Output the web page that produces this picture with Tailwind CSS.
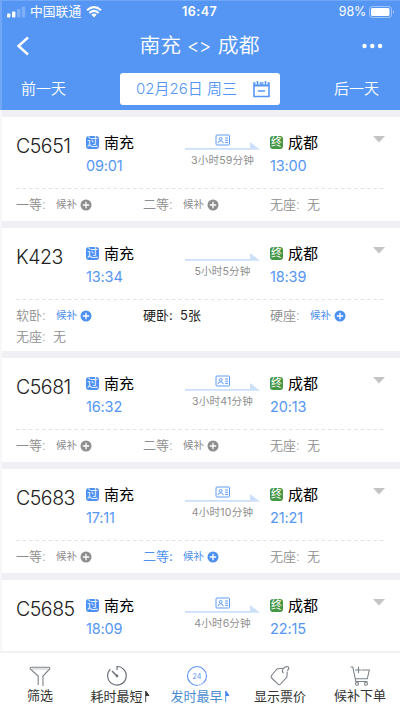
<!DOCTYPE html>
<html lang="zh-CN">
<head>
<meta charset="utf-8">
<title>南充 - 成都</title>
<script src="https://cdn.jsdelivr.net/npm/@tailwindcss/browser@4"></script>
</head>
<body class="w-[400px] h-[711px] overflow-hidden bg-[#efeff4] font-['Inter','Noto_Sans_CJK_SC',sans-serif] [font-feature-settings:'calt'_0]">
<div class="flex flex-col w-[400px] h-[711px] overflow-hidden">
  <header class="h-[110px] shrink-0 bg-[#5596f5] text-white border-l-2 border-t border-[#6fa6f6]">
    <div class="flex items-center h-[22px] pl-[5px] pr-[5px]">
      <svg class="w-[19px] h-[12px] shrink-0" viewBox="0 0 19 12"><rect x="0" y="7.5" width="3.4" height="4" rx="1" fill="#fff"/><rect x="5" y="5.5" width="3.4" height="6" rx="1" fill="#fff"/><rect x="10" y="3" width="3.4" height="8.5" rx="1" fill="#fff" opacity=".25"/><rect x="14.8" y="0.5" width="3.4" height="11" rx="1" fill="#fff" opacity=".25"/></svg>
      <span class="ml-[4px] w-[56px] text-[12.8px] leading-[20px] whitespace-nowrap">中国联通</span>
      <svg class="w-[16px] h-[12px] shrink-0" viewBox="0 0 16 12"><path d="M1 4.2Q8-2 15 4.2M3.4 6.9Q8 2.9 12.6 6.9" fill="none" stroke="#fff" stroke-width="2"/><path d="M5.3 8.6Q8 6.4 10.7 8.6L8 11.4Z" fill="#fff"/></svg>
      <span class="ml-[80px] w-[40px] text-[12.6px] leading-[20px] font-semibold tracking-[.45px]">16:47</span>
      <span class="ml-auto text-[12.5px] leading-[20px] tracking-[-.2px]">98%</span>
      <svg class="ml-[3px] w-[26px] h-[12px] shrink-0" viewBox="0 0 26 12"><rect x=".5" y=".5" width="22" height="11" rx="3" fill="none" stroke="#fff" opacity=".45"/><rect x="2" y="2" width="18.5" height="8" rx="1.5" fill="#fff"/><path d="M24 4Q26 6 24 8Z" fill="#fff" opacity=".5"/></svg>
    </div>
    <div class="flex items-center justify-between h-[45px] pl-[14px] pr-[17px]">
      <svg class="w-[14px] h-[20px]" viewBox="0 0 14 20"><path d="M12 1.5L2.5 10L12 18.5" fill="none" stroke="#fff" stroke-width="2.4"/></svg>
      <h1 class="mt-px ml-[7px] text-[20.8px] leading-[30px] font-[350] whitespace-nowrap">南充 <span class="inline-block w-[25px] text-[19px] tracking-[-.6px]">&lt;&gt;</span> 成都</h1>
      <svg class="w-[21px] h-[6px]" viewBox="0 0 21 6"><circle cx="2.5" cy="3" r="2.2" fill="#fff"/><circle cx="10.3" cy="3" r="2.2" fill="#fff"/><circle cx="18.1" cy="3" r="2.2" fill="#fff"/></svg>
    </div>
    <div class="flex items-center h-[41px] pl-[19px] pr-[21px] text-[15px] font-[350]">
      <span class="w-[99px] mt-px whitespace-nowrap">前一天</span>
      <div class="flex items-center w-[160px] h-[32px] mt-[1px] rounded-[3px] bg-white text-[#5596f5] pl-[16px] pr-[10px] whitespace-nowrap"><span class="text-[15px]">02月26日 周三</span>
        <svg class="ml-auto w-[17px] h-[17px]" viewBox="0 0 17 17" fill="none" stroke="#5596f5"><path d="M1 2H16V15.5H1ZM5 10H12" stroke-width="1.6"/><path d="M1 4.3H16" stroke-width="2.4"/><path d="M4.5 0V3.6M12.5 0V3.6" stroke="#fff" stroke-width="4"/><path d="M4.5 0V4M12.5 0V4" stroke-width="1.6"/></svg>
      </div>
      <span class="ml-auto mt-px whitespace-nowrap">后一天</span>
    </div>
  </header>
  <main id="trains" class="flex flex-col gap-[7px] pt-[7px] h-[541px] overflow-hidden border-l-2 border-[#f7f7fa]"></main>
  <nav class="flex h-[60px] shrink-0 bg-white border-t-2 border-[#f2f2f4] text-[13px] leading-[18px] text-[#333] whitespace-nowrap">
    <div class="flex flex-col items-center w-[80px] pt-[12px]">
      <svg class="w-[22px] h-[22px]" viewBox="0 0 22 22" fill="none" stroke="#7b8188" stroke-width="1.1"><path d="M9.2 20V11L1.3 4Q1 2.2 2.5 2.2H19.5Q21 2.2 20.7 4L14 11V21"/><path d="M3 4H19" stroke="#b5b9bd" stroke-width=".8"/></svg>
      <span class="-mt-[1px]">筛选</span>
    </div>
    <div class="flex flex-col items-center w-[80px] pt-[12px]">
      <svg class="-ml-[6px] w-[22px] h-[22px]" viewBox="0 0 22 22" fill="none" stroke="#6b7178" stroke-width="1.2"><path d="M11 5V1.5A9.3 9.3 0 1 1 4.4 4.2"/><path d="M6 6L11 11" stroke-width="1.5"/><circle cx="11" cy="11" r=".8" fill="#6b7178"/></svg>
      <div class="flex items-center"><span>耗时最短</span><svg class="ml-[2px] w-[5px] h-[12px]" viewBox="0 0 5 12"><path d="M.7 12V1L4 5.5H.7" fill="#333" stroke="#333" stroke-width=".9"/></svg></div>
    </div>
    <div class="flex flex-col items-center w-[80px] pt-[12px] text-[#4a8bd0]">
      <svg class="-ml-[6px] w-[22px] h-[22px]" viewBox="0 0 22 22"><circle cx="11" cy="11" r="9.5" fill="none" stroke="#5b93f0" stroke-width="1.1"/><path d="M17.5 18A9.5 9.5 0 0 1 11 20.5" fill="none" stroke="#fff" stroke-width="1.5" stroke-dasharray="1 1.5"/><text x="11" y="13.5" font-family="Inter" font-size="7.2" text-anchor="middle" fill="#5b93f0">24</text></svg>
      <div class="flex items-center"><span>发时最早</span><svg class="ml-[2px] w-[5px] h-[12px]" viewBox="0 0 5 12"><path d="M.7 12V1L4 5.5H.7" fill="#4285f4" stroke="#4285f4" stroke-width=".9"/></svg></div>
    </div>
    <div class="flex flex-col items-center w-[80px] pt-[12px]">
      <svg class="w-[22px] h-[22px]" viewBox="0 0 22 22" fill="none" stroke="#7b8188" stroke-width="1.1"><path d="M14.5 3.2L9 3.8Q8 4 7.5 4.5L2.5 10.5Q1.5 12 2.7 13L9 19.2Q10.3 20.3 11.5 19L17.2 13Q18 12 18 11L18.2 6.5"/><path d="M14.5 8Q12.5 6.5 14 4Q16 1 19 1.8Q21 3 18.3 5.5"/></svg>
      <span>显示票价</span>
    </div>
    <div class="flex flex-col items-center w-[80px] pt-[12px]">
      <svg class="w-[22px] h-[22px]" viewBox="0 0 22 22" fill="none" stroke="#7b8188" stroke-width="1.1"><path d="M1.5 2H3.8L6.8 16.5H18.5M9 5H6M13 5H20.3L18.3 13.8H6.5M9.5 1.8V8M7 5H12.5"/><circle cx="8" cy="18.8" r="1.5"/><circle cx="17" cy="18.8" r="1.5"/></svg>
      <span class="-mt-[1px]">候补下单</span>
    </div>
  </nav>
</div>
<script>
// Seat entry: [label, value, state]; state is "full", "wait" (waitlist), "open" (waitlist enabled) or "sale".
const trains = [
  ["C5651", "09:01", "13:00", "3小时59分钟", true, [["一等", "", "wait"], ["二等", "", "wait"], ["无座", "无", "full"]]],
  ["K423", "13:34", "18:39", "5小时5分钟", false, [["软卧", "", "open"], ["硬卧", "5张", "sale"], ["硬座", "", "open"], ["无座", "无", "full"]]],
  ["C5681", "16:32", "20:13", "3小时41分钟", true, [["一等", "", "wait"], ["二等", "", "wait"], ["无座", "无", "full"]]],
  ["C5683", "17:11", "21:21", "4小时10分钟", true, [["一等", "", "wait"], ["二等", "", "open"], ["无座", "无", "full"]]],
  ["C5685", "18:09", "22:15", "4小时6分钟", true, []]
];
const plus = '<svg class="ml-[3px] w-[12px] h-[12px]" viewBox="0 0 12 12"><circle cx="6" cy="6" r="5.5" fill="currentColor"/><path d="M6 2.8V9.2M2.8 6H9.2" stroke="#fff" stroke-width="1.3"/></svg>';
const seat = ([label, value, state]) => {
  const tone = state === "sale" ? "text-[#222]" : "text-[#8e8e8e] font-[350]";
  const waitTone = state === "open" ? "text-[#4d90f0]" : "text-[#8e8e8e]";
  const labelTone = state === "open" && label === "二等" ? "text-[#4d90f0]" : tone;
  const body = state === "wait" || state === "open"
    ? `<span class="flex items-center ml-[3px] text-[10.5px] ${waitTone}">候补${plus}</span>`
    : `<span class="${tone}">${value}</span>`;
  return `<div class="flex items-center h-[21px] text-[13px] whitespace-nowrap"><span class="w-[37px] ${labelTone}">${label}:</span>${body}</div>`;
};
const station = (mark, color, name, time) => `<div class="pt-[15px]">
  <div class="flex items-center h-[22px]"><span class="flex items-center justify-center w-[13px] h-[13px] mb-[2px] rounded-[3px] text-white text-[11px] leading-[13px] ${color}">${mark}</span><span class="ml-[5px] text-[15px] text-black whitespace-nowrap">${name}</span></div>
  <div class="h-[24px] leading-[24px] text-[14.5px] text-[#5596f5] tracking-[-.15px]">${time}</div></div>`;
document.getElementById("trains").innerHTML = trains.map(([no, dep, arr, span, card, seats]) => `
<article class="shrink-0 bg-white pl-[14px] pr-[15px] ${seats.length > 3 ? "h-[123px]" : seats.length ? "h-[104px]" : "h-[71px]"}">
  <div class="grid grid-cols-[70px_99px_75px_10px_103px_12px] h-[71px]">
    <div class="pt-[14px] text-[19.5px] leading-[30px] text-[#222] font-[350] tracking-[-.45px]">${no}</div>
    ${station("过", "bg-[#4d90f5]", "南充", dep)}
    <div class="pt-[17px]">
      <svg class="w-[75px] h-[17px]" viewBox="0 0 75 17"><path d="M0 14H65V8L75 15.7H0Z" fill="#cce0fa"/>${card ? '<g fill="none" stroke="#5f9cf5" stroke-width="1"><rect x="31" y="1" width="13.5" height="10" rx="1"/><circle cx="35.7" cy="4.8" r="1.4"/><path d="M33 9.2Q33.3 6.8 35.7 6.8T38.4 9.2M40 4H43M40 6.2H43M40 8.4H43"/></g>' : ""}</svg>
      <div class="text-center text-[10.6px] leading-[20px] text-[#8e8e8e] tracking-[.15px] whitespace-nowrap">${span}</div>
    </div>
    <div></div>
    ${station("终", "bg-[#459645]", "成都", arr)}
    <svg class="mt-[19px] w-[12px] h-[7px]" viewBox="0 0 12 7"><path d="M0 0H12L6 6.5Z" fill="#c4c4c4"/></svg>
  </div>
  ${seats.length ? `<svg class="block w-[369px] h-px" viewBox="0 0 369 1"><path d="M0 .5H369" stroke="#e2e2e2" stroke-dasharray="3.5 3"/></svg>
  <div class="grid grid-cols-[127px_127px_115px] pt-[5px]">${seats.map(seat).join("")}</div>` : ""}
</article>`).join("");
</script>
</body>
</html>
